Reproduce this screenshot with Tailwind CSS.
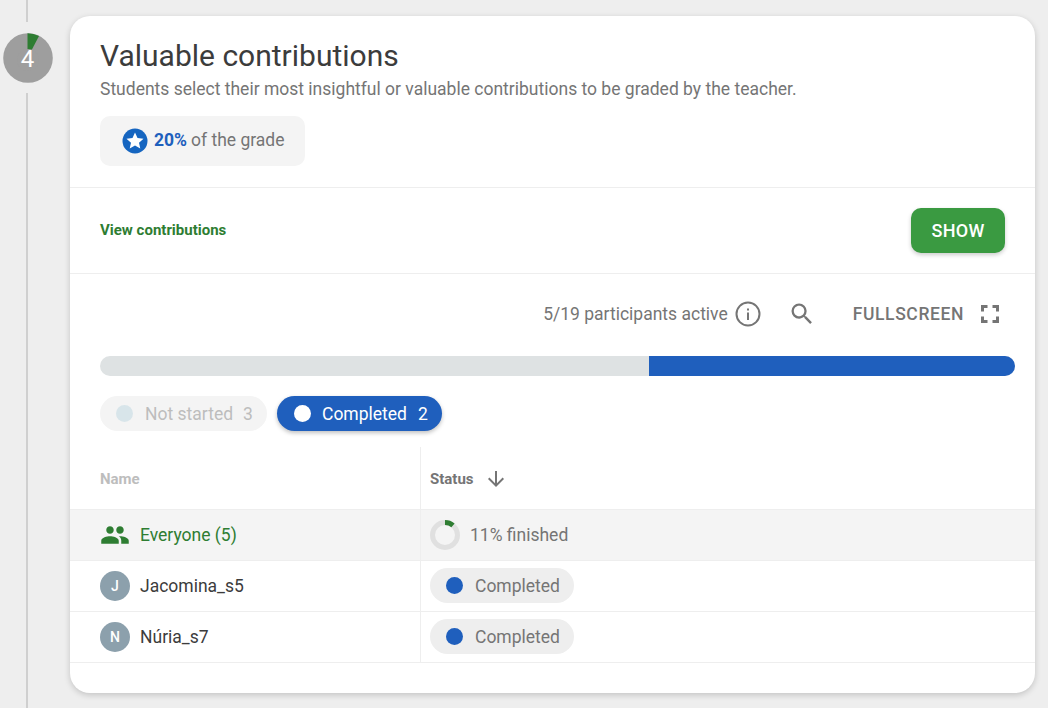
<!DOCTYPE html>
<html lang="en">
<head>
  <meta charset="UTF-8">
  <title>Valuable contributions</title>
  <script src="https://cdn.jsdelivr.net/npm/@tailwindcss/browser@4"></script>
</head>
<body class="bg-[#eeeeee] font-['Roboto',sans-serif] text-[#757575] overflow-hidden">
  <div class="flex h-[708px] overflow-hidden">

    <!-- step rail -->
    <div class="w-[70px] shrink-0 flex flex-col">
      <div class="w-[2px] h-[22px] bg-[#cfcfcf] ml-[26px]"></div>
      <div class="relative w-[50px] h-[50px] ml-[2.5px] mt-[11px]">
        <svg class="absolute inset-0" width="50" height="50" viewBox="0 0 50 50">
          <circle cx="25" cy="25" r="24.8" fill="#9e9e9e"/>
          <path d="M24.5 25V.2A24.8 24.8 0 0 1 36 3Z" fill="#2e7d32"/>
          <circle cx="25" cy="27" r="11" fill="#9e9e9e"/>
        </svg>
        <span class="absolute inset-0 flex items-center justify-center text-white text-[24px] pt-[1px]">4</span>
      </div>
      <div class="w-[2px] flex-1 bg-[#cfcfcf] ml-[26px] mt-[10px]"></div>
    </div>

    <!-- card -->
    <div class="w-[965px] h-[677px] mt-[16px] bg-white rounded-[20px] shadow-[0_2px_6px_rgba(0,0,0,0.18)] flex flex-col">
      <div class="h-[172px] px-[30px] pt-[23px] border-b border-[#eeeeee]">
        <h1 class="text-[30px] leading-[34px] text-[#3c3c3c]">Valuable contributions</h1>
        <p class="text-[17.5px] leading-[20px] mt-[6px]">Students select their most insightful or valuable contributions to be graded by the teacher.</p>
        <div class="mt-[17px] w-[205px] h-[50px] bg-[#f4f4f4] rounded-[10px] flex items-center pl-[22px]">
          <svg width="26" height="26" viewBox="0 0 26 26">
            <circle cx="13" cy="13" r="12.5" fill="#1565c0"/>
            <path d="M13 4.6l2.5 5.5 6 .6-4.5 4 1.3 5.9-5.3-3.1-5.3 3.1 1.3-5.9-4.5-4 6-.6z" fill="#fff"/>
          </svg>
          <span class="ml-[6px] pb-[1px] text-[17.5px] font-bold text-[#1e60bd]">20%</span>
          <span class="ml-[4px] pb-[1px] text-[17.5px]">of the grade</span>
        </div>
      </div>

      <div class="h-[86px] px-[30px] flex items-center justify-between border-b border-[#eeeeee]">
        <span class="text-[15px] font-bold text-[#2e7d32]">View contributions</span>
        <button class="w-[94px] h-[45px] rounded-[10px] bg-[#3a9a41] text-white text-[18px] font-medium tracking-[0.3px] shadow-[0_2px_4px_rgba(0,0,0,0.2)]">SHOW</button>
      </div>

      <div class="h-[82px] flex items-center justify-end pr-[33px] pb-[2px]">
        <span class="text-[17.5px]">5/19 participants active</span>
        <svg class="ml-[7px]" width="26" height="26" viewBox="0 0 26 26" fill="none">
          <circle cx="13" cy="13" r="11.5" stroke="#757575" stroke-width="2"/>
          <rect x="12" y="11.5" width="2" height="7.5" fill="#757575"/>
          <rect x="12" y="7.5" width="2" height="2" fill="#757575"/>
        </svg>
        <svg class="ml-[27px]" width="28" height="28" viewBox="0 0 24 24" fill="#757575">
          <path d="M15.5 14h-.79l-.28-.27A6.47 6.47 0 0 0 16 9.5 6.5 6.5 0 1 0 9.5 16c1.61 0 3.09-.59 4.23-1.57l.27.28v.79l5 4.99L20.49 19l-4.99-5zm-6 0C7.01 14 5 11.99 5 9.5S7.01 5 9.5 5 14 7.01 14 9.5 11.99 14 9.5 14z"/>
        </svg>
        <span class="ml-[37px] text-[17.5px] font-medium tracking-[0.6px]">FULLSCREEN</span>
        <svg class="ml-[14px]" width="24" height="24" viewBox="0 0 24 24" fill="none" stroke="#757575" stroke-width="3">
          <path d="M4.5 9.5V4.5H9.5M14.5 4.5H19.5V9.5M19.5 14.5V19.5H14.5M9.5 19.5H4.5V14.5"/>
        </svg>
      </div>

      <div class="ml-[30px] mr-[20px] h-[20px] rounded-full overflow-hidden bg-[#dee2e3] flex justify-end">
        <div class="w-[366px] h-full bg-[#1f5fbd]"></div>
      </div>

      <div class="flex gap-[10px] mx-[30px] mt-[20px]">
        <div class="h-[35px] w-[167px] rounded-full bg-[#f4f4f4] flex items-center pl-[16px] text-[17.5px] text-[#bdbdbd]">
          <span class="w-[17px] h-[17px] rounded-full bg-[#d8e5ea]"></span>
          <span class="ml-[12px] pt-[1px]">Not started</span>
          <span class="ml-[10px] pt-[1px]">3</span>
        </div>
        <div class="h-[35px] w-[165px] rounded-full bg-[#1f5fbd] shadow-[0_2px_4px_rgba(0,0,0,0.25)] flex items-center pl-[17px] text-[17.5px] text-white">
          <span class="w-[17px] h-[17px] rounded-full bg-white"></span>
          <span class="ml-[11px] pt-[1px]">Completed</span>
          <span class="ml-[11px] pt-[1px]">2</span>
        </div>
      </div>

      <!-- table -->
      <div class="mt-[16px] border-b border-[#eeeeee]">
        <div class="flex h-[63px] border-b border-[#eeeeee]">
          <div class="w-[351px] pl-[30px] pt-[2px] border-r border-[#eeeeee] flex items-center text-[15px] font-bold text-[#bdbdbd]">Name</div>
          <div class="flex-1 pl-[9px] pt-[2px] flex items-center text-[15px] font-bold text-[#757575]">
            Status
            <svg class="ml-[10px]" width="24" height="24" viewBox="0 0 24 24" fill="#757575">
              <path d="M20 12l-1.41-1.41L13 16.17V4h-2v12.17l-5.58-5.59L4 12l8 8 8-8z"/>
            </svg>
          </div>
        </div>
        <div class="flex h-[51px] bg-[#f4f4f4] border-b border-[#eeeeee]">
          <div class="w-[351px] pl-[30px] border-r border-[#eeeeee] flex items-center text-[17.5px] text-[#2e7d32]">
            <svg width="30" height="30" viewBox="0 0 24 24" fill="#2e7d32">
              <path d="M16 11c1.66 0 2.99-1.34 2.99-3S17.66 5 16 5s-3 1.34-3 3 1.34 3 3 3zm-8 0c1.66 0 2.99-1.34 2.99-3S9.66 5 8 5 5 6.34 5 8s1.34 3 3 3zm0 2c-2.33 0-7 1.17-7 3.5V19h14v-2.5c0-2.33-4.67-3.5-7-3.5zm8 0c-.29 0-.62.02-.97.05 1.16.84 1.97 1.97 1.97 3.45V19h6v-2.5c0-2.33-4.67-3.5-7-3.5z"/>
            </svg>
            <span class="ml-[10px]">Everyone (5)</span>
          </div>
          <div class="flex-1 pl-[9px] flex items-center text-[17.5px]">
            <svg width="30" height="30" viewBox="0 0 30 30" fill="none">
              <circle cx="15" cy="15" r="12.5" stroke="#e0e0e0" stroke-width="5"/>
              <path d="M15 2.5A12.5 12.5 0 0 1 23 5.4" stroke="#2e7d32" stroke-width="5"/>
            </svg>
            <span class="ml-[10px]">11% finished</span>
          </div>
        </div>
        <div class="flex h-[51px] border-b border-[#eeeeee]">
          <div class="w-[351px] pl-[30px] border-r border-[#eeeeee] flex items-center text-[17.5px] text-[#3c3c3c]">
            <span class="w-[30px] h-[30px] rounded-full bg-[#8ca0ac] text-white text-[14px] font-medium flex items-center justify-center">J</span>
            <span class="ml-[10px]">Jacomina_s5</span>
          </div>
          <div class="flex-1 pl-[9px] pb-[2px] flex items-center">
            <div class="h-[35px] w-[144px] rounded-full bg-[#eeeeee] flex items-center pl-[16px] text-[17.5px]">
              <span class="w-[17px] h-[17px] rounded-full bg-[#1f5fbd]"></span>
              <span class="ml-[12px] pt-[2px]">Completed</span>
            </div>
          </div>
        </div>
        <div class="flex h-[50px]">
          <div class="w-[351px] pl-[30px] border-r border-[#eeeeee] flex items-center text-[17.5px] text-[#3c3c3c]">
            <span class="w-[30px] h-[30px] rounded-full bg-[#8ca0ac] text-white text-[14px] font-medium flex items-center justify-center">N</span>
            <span class="ml-[10px]">Núria_s7</span>
          </div>
          <div class="flex-1 pl-[9px] pb-[2px] flex items-center">
            <div class="h-[35px] w-[144px] rounded-full bg-[#eeeeee] flex items-center pl-[16px] text-[17.5px]">
              <span class="w-[17px] h-[17px] rounded-full bg-[#1f5fbd]"></span>
              <span class="ml-[12px] pt-[2px]">Completed</span>
            </div>
          </div>
        </div>
      </div>
    </div>
  </div>
</body>
</html>
